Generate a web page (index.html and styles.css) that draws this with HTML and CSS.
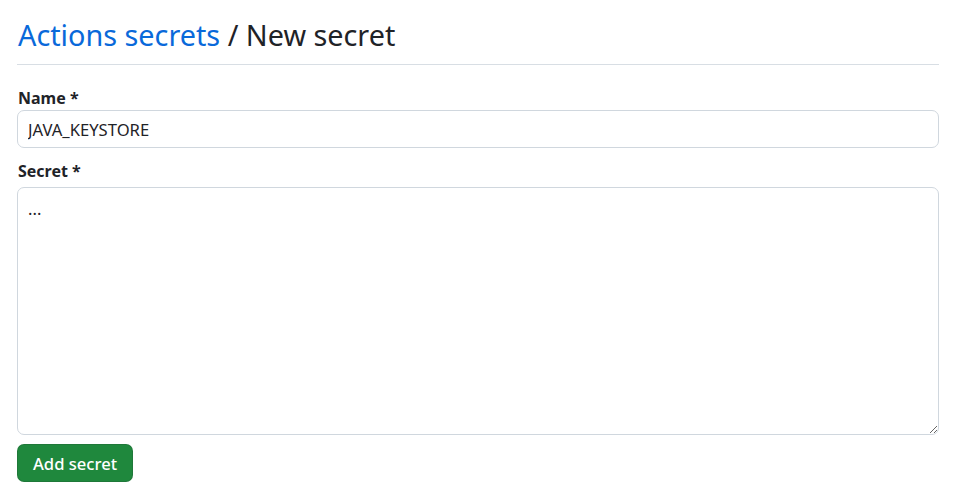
FILE: index.html
```html
<!DOCTYPE html>
<html>
<head>
<meta charset="utf-8">
<link rel="stylesheet" href="styles.css">
</head>
<body>
<div class="page">
  <div class="subhead">
    <h2 class="subhead-heading"><a class="crumb" href="#">Actions secrets</a> / New secret</h2>
  </div>
  <form class="form">
    <div class="group">
      <label class="label">Name *</label>
      <input class="input" type="text" value="JAVA_KEYSTORE">
    </div>
    <div class="group group-secret">
      <label class="label">Secret *</label>
      <textarea class="textarea">...</textarea>
    </div>
    <button class="btn" type="button">Add secret</button>
  </form>
</div>
</body>
</html>
```
FILE: styles.css
```css
* { box-sizing: border-box; }
body {
  margin: 0;
  background: #ffffff;
  font-family: "Noto Sans", sans-serif;
  color: #1f2328;
}
.page {
  padding: 16px 29px 0 17px;
}
.subhead {
  border-bottom: 1px solid #d8dee4;
  padding-bottom: 10px;
  margin-bottom: 23px;
}
.subhead-heading {
  margin: 0;
  padding-left: 1px;
  font-size: 28.8px;
  font-weight: 400;
  line-height: 38px;
  color: #1f2328;
}
.crumb {
  color: #0969da;
  text-decoration: none;
}
.form {
  display: flex;
  flex-direction: column;
  align-items: flex-start;
}
.group {
  display: flex;
  flex-direction: column;
  width: 100%;
  margin-bottom: 13px;
}
.group-secret {
  margin-bottom: 9px;
}
.label {
  font-size: 16px;
  font-weight: 700;
  line-height: 20px;
  margin-bottom: 2px;
  padding-left: 1px;
}
.group-secret .label {
  margin-bottom: 6px;
}
.input, .textarea {
  width: 100%;
  font-family: "Noto Sans", sans-serif;
  font-size: 16.6px;
  color: #1f2328;
  border: 1px solid #d0d7de;
  border-radius: 7px;
  background: #fff;
  padding: 5px 10px;
}
.input {
  height: 38px;
}
.textarea {
  height: 248px;
  padding: 9px 10px;
  resize: vertical;
  line-height: 24px;
}
.btn {
  font-family: "Noto Sans", sans-serif;
  font-size: 16.6px;
  font-weight: 500;
  color: #fff;
  background: #1f883d;
  border: 1px solid rgba(31,35,40,0.15);
  border-radius: 7px;
  height: 38px;
  padding: 0 15px;
}
```
